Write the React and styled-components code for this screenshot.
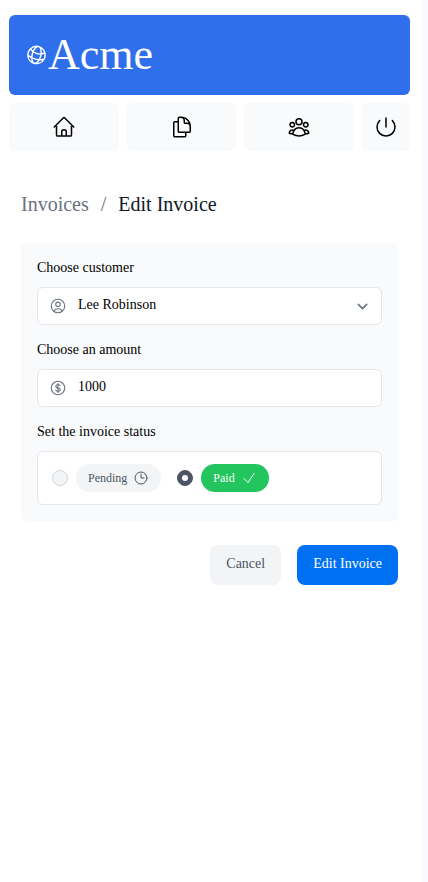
import React from 'react';
import styled, { createGlobalStyle } from 'styled-components';
import {
  HiOutlineCheck,
  HiOutlineClock,
  HiOutlineCurrencyDollar,
  HiOutlineDocumentDuplicate,
  HiOutlineGlobeAlt,
  HiOutlineHome,
  HiOutlinePower,
  HiOutlineUserCircle,
  HiOutlineUserGroup,
} from 'react-icons/hi2';

const GlobalStyle = createGlobalStyle`
  *, *::before, *::after { box-sizing: border-box; }
  html { background: #f8f9fe; }
  body {
    margin: 0;
    font-family: "Liberation Serif", "Times New Roman", serif;
    color: #000;
    overflow: hidden;
  }
  svg { display: block; flex-shrink: 0; }
`;

const Page = styled.div`
  width: 422px;
  min-height: 882px;
  padding: 15px 12px 0 9px;
  background: #fff;
`;

const Brand = styled.header`
  display: flex;
  align-items: center;
  height: 80px;
  padding: 0 16px;
  border-radius: 6px;
  background: #2f6feb;
  color: #fff;
  font-size: 44px;
  line-height: 1;

  svg {
    width: 23px;
    height: 48px;
    transform: rotate(15deg);
  }
`;

const Nav = styled.nav`
  display: flex;
  gap: 8px;
  margin-top: 8px;
`;

const NavItem = styled.a`
  display: flex;
  flex: ${({ $compact }) => ($compact ? '0 0 48px' : '1 1 0')};
  align-items: center;
  justify-content: center;
  height: 48px;
  border-radius: 6px;
  background: #f9fafb;
  color: #000;

  svg {
    width: 24px;
    height: 24px;
  }
`;

const Main = styled.main`
  padding: 39px 12px 0;
`;

const Breadcrumbs = styled.ol`
  display: flex;
  gap: 12px;
  margin: 0 0 25px;
  padding: 0;
  list-style: none;
  font-size: 20px;
  line-height: 28px;
`;

const Crumb = styled.li`
  color: ${({ $active }) => ($active ? '#111827' : '#6b7280')};
`;

const Card = styled.div`
  display: flex;
  flex-direction: column;
  gap: 16px;
  height: 278px;
  padding: 16px;
  border-radius: 6px;
  background: #f9fafb;
`;

const Label = styled.div`
  margin-bottom: 10px;
  font-size: 14px;
  line-height: 18px;
`;

const Control = styled.div`
  display: flex;
  align-items: center;
  height: 38px;
  padding: 0 8px 0 11px;
  border: 1px solid #e5e7eb;
  border-radius: 6px;
  background: #fff;
  font-size: 14px;

  > svg {
    color: #6b7280;
  }
`;

const Value = styled.span`
  flex: 1;
  margin-left: 11px;
  padding-bottom: 3px;
  line-height: 18px;
`;

const StatusBox = styled.div`
  display: flex;
  align-items: center;
  gap: 16px;
  height: 54px;
  padding: 0 14px;
  border: 1px solid #e5e7eb;
  border-radius: 6px;
  background: #fff;
`;

const Option = styled.div`
  display: flex;
  align-items: center;
  gap: 8px;
`;

const Radio = styled.span`
  display: flex;
  align-items: center;
  justify-content: center;
  width: 16px;
  height: 16px;
  border: 1px solid ${({ $checked }) => ($checked ? '#4b5563' : '#d1d5db')};
  border-radius: 50%;
  background: ${({ $checked }) => ($checked ? '#4b5563' : '#f3f4f6')};

  &::after {
    content: '';
    width: 6px;
    height: 6px;
    border-radius: 50%;
    background: ${({ $checked }) => ($checked ? '#fff' : 'transparent')};
  }
`;

const Badge = styled.span`
  display: flex;
  align-items: center;
  gap: 6px;
  height: 28px;
  padding: 0 12px;
  border-radius: 14px;
  background: ${({ $paid }) => ($paid ? '#22c55e' : '#f3f4f6')};
  color: ${({ $paid }) => ($paid ? '#fff' : '#4b5563')};
  font-size: 12px;
  line-height: 16px;
`;

const Actions = styled.div`
  display: flex;
  justify-content: flex-end;
  gap: 16px;
  margin-top: 24px;
`;

const Button = styled.button`
  height: 40px;
  padding: 0 16px 2px;
  border: 0;
  border-radius: 8px;
  background: ${({ $primary }) => ($primary ? '#0070f3' : '#f3f4f6')};
  color: ${({ $primary }) => ($primary ? '#fff' : '#4b5563')};
  font-family: inherit;
  font-size: 14px;
  line-height: 20px;
`;

function Chevron() {
  return (
    <svg
      width="21"
      height="21"
      viewBox="0 0 20 20"
      fill="none"
      stroke="currentColor"
      strokeWidth="1.5"
      strokeLinecap="round"
      strokeLinejoin="round"
    >
      <path d="M6 8l4 4 4-4" />
    </svg>
  );
}

export default function App() {
  return (
    <>
      <GlobalStyle />
      <Page>
        <Brand>
          <HiOutlineGlobeAlt />
          <span>Acme</span>
        </Brand>
        <Nav>
          <NavItem><HiOutlineHome /></NavItem>
          <NavItem><HiOutlineDocumentDuplicate /></NavItem>
          <NavItem><HiOutlineUserGroup /></NavItem>
          <NavItem $compact><HiOutlinePower /></NavItem>
        </Nav>
        <Main>
          <Breadcrumbs>
            <Crumb>Invoices</Crumb>
            <Crumb>/</Crumb>
            <Crumb $active>Edit Invoice</Crumb>
          </Breadcrumbs>
          <Card>
            <div>
              <Label>Choose customer</Label>
              <Control>
                <HiOutlineUserCircle size={18} />
                <Value>Lee Robinson</Value>
                <Chevron />
              </Control>
            </div>
            <div>
              <Label>Choose an amount</Label>
              <Control>
                <HiOutlineCurrencyDollar size={18} />
                <Value>1000</Value>
              </Control>
            </div>
            <div>
              <Label>Set the invoice status</Label>
              <StatusBox>
                <Option>
                  <Radio />
                  <Badge>Pending <HiOutlineClock size={16} /></Badge>
                </Option>
                <Option>
                  <Radio $checked />
                  <Badge $paid>Paid <HiOutlineCheck size={16} /></Badge>
                </Option>
              </StatusBox>
            </div>
          </Card>
          <Actions>
            <Button>Cancel</Button>
            <Button $primary>Edit Invoice</Button>
          </Actions>
        </Main>
      </Page>
    </>
  );
}
